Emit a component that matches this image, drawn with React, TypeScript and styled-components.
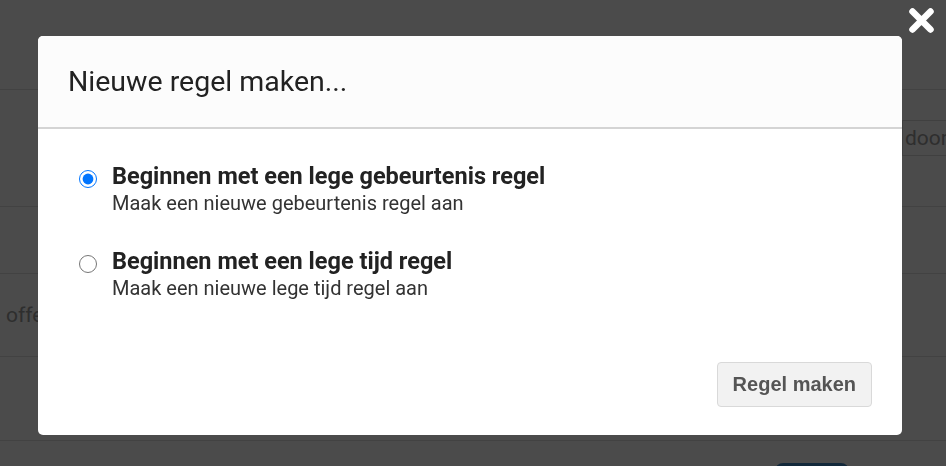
import React, { useState } from "react";
import { styled, createGlobalStyle } from "styled-components";

const GlobalStyle = createGlobalStyle`
  html, body {
    margin: 0;
    padding: 0;
    height: 100%;
    overflow: hidden;
    background: #ffffff;
    font-family: Roboto, "Noto Sans", sans-serif;
  }
`;

const Page = styled.div`
  display: flex;
  flex-direction: column;
  width: 946px;
  height: 466px;
  overflow: hidden;
  background: #fbfbfb;
`;

const PageRow = styled.div<{ $h: number; $align?: string }>`
  display: flex;
  align-items: ${(p) => p.$align || "center"};
  height: ${(p) => p.$h}px;
  flex-shrink: 0;
  border-bottom: 1px solid #dcdcdc;
  box-sizing: border-box;
`;

const InputRow = styled(PageRow)`
  justify-content: flex-end;
  padding-top: 30px;
`;

const FakeInput = styled.div`
  width: 44px;
  height: 36px;
  box-sizing: border-box;
  border: 1px solid #d8d8d8;
  border-right: none;
  padding-left: 2px;
  font-size: 21px;
  line-height: 34px;
  color: #9a9a9a;
  overflow: hidden;
  white-space: nowrap;
`;

const RowText = styled.span`
  padding-left: 6px;
  font-size: 21px;
  color: #9a9a9a;
`;

const BottomRow = styled.div`
  display: flex;
  flex-shrink: 0;
  padding: 22px 0 0 775px;
`;

const DarkButton = styled.div`
  width: 74px;
  height: 30px;
  border-radius: 8px;
  background: #3f86c2;
`;

const Overlay = styled.div`
  position: fixed;
  inset: 0;
  background: rgba(0, 0, 0, 0.7);
  display: flex;
  align-items: flex-start;
  padding: 36px 0 0 38px;
`;

const CloseButton = styled.button`
  position: absolute;
  top: 7px;
  right: 11px;
  width: 27px;
  height: 27px;
  padding: 0;
  border: none;
  background: none;
  cursor: pointer;
  display: flex;
`;

const Modal = styled.div`
  width: 864px;
  background: #ffffff;
  border-radius: 5px;
  overflow: hidden;
  display: flex;
  flex-direction: column;
`;

const Header = styled.div`
  display: flex;
  align-items: center;
  height: 91px;
  padding: 0 30px;
  background: #fcfcfc;
  border-bottom: 2px solid #d4d4d4;
`;

const Title = styled.h4`
  margin: 0;
  font-size: 28.5px;
  font-weight: 400;
  color: #222222;
`;

const Body = styled.div`
  display: flex;
  flex-direction: column;
  gap: 33px;
  padding: 34px 40px 0 41px;
`;

const Option = styled.label`
  display: flex;
  align-items: flex-start;
  gap: 15px;
  cursor: pointer;
`;

const Radio = styled.input`
  width: 18px;
  height: 18px;
  margin: 7px 0 0 0;
  flex-shrink: 0;
`;

const OptionText = styled.div`
  display: flex;
  flex-direction: column;
`;

const OptionTitle = styled.span`
  font-size: 23.5px;
  font-weight: 700;
  line-height: 26px;
  color: #222222;
`;

const OptionDesc = styled.span`
  padding-top: 2px;
  font-size: 20px;
  line-height: 24px;
  color: #333333;
`;

const Footer = styled.div`
  display: flex;
  justify-content: flex-end;
  padding: 62px 30px 28px;
`;

const PrimaryButton = styled.button`
  height: 45px;
  padding: 0 15px;
  border: 1px solid #d9d9d9;
  border-radius: 4px;
  background: #f2f2f2;
  font-family: "Liberation Sans", Arial, sans-serif;
  font-size: 20px;
  font-weight: 700;
  color: #555555;
  cursor: pointer;
`;

const options = [
  {
    id: "event",
    title: "Beginnen met een lege gebeurtenis regel",
    desc: "Maak een nieuwe gebeurtenis regel aan",
  },
  {
    id: "time",
    title: "Beginnen met een lege tijd regel",
    desc: "Maak een nieuwe lege tijd regel aan",
  },
];

export default function App() {
  const [choice, setChoice] = useState("event");

  return (
    <>
      <GlobalStyle />
      <Page>
        <PageRow $h={90} />
        <InputRow $h={117} $align="flex-start">
          <FakeInput>door</FakeInput>
        </InputRow>
        <PageRow $h={67} />
        <PageRow $h={83}>
          <RowText>offerte</RowText>
        </PageRow>
        <PageRow $h={84} />
        <BottomRow>
          <DarkButton />
        </BottomRow>
      </Page>
      <Overlay>
        <CloseButton aria-label="Sluiten">
          <svg width="27" height="27" viewBox="0 0 27 27">
            <path
              d="M4.5 4.5 L22.5 22.5 M22.5 4.5 L4.5 22.5"
              stroke="#ffffff"
              strokeWidth="6.5"
              strokeLinecap="round"
              fill="none"
            />
          </svg>
        </CloseButton>
        <Modal>
          <Header>
            <Title>Nieuwe regel maken...</Title>
          </Header>
          <Body>
            {options.map((item) => (
              <Option key={item.id}>
                <Radio
                  type="radio"
                  name="regel"
                  checked={choice === item.id}
                  onChange={() => setChoice(item.id)}
                />
                <OptionText>
                  <OptionTitle>{item.title}</OptionTitle>
                  <OptionDesc>{item.desc}</OptionDesc>
                </OptionText>
              </Option>
            ))}
          </Body>
          <Footer>
            <PrimaryButton>Regel maken</PrimaryButton>
          </Footer>
        </Modal>
      </Overlay>
    </>
  );
}
